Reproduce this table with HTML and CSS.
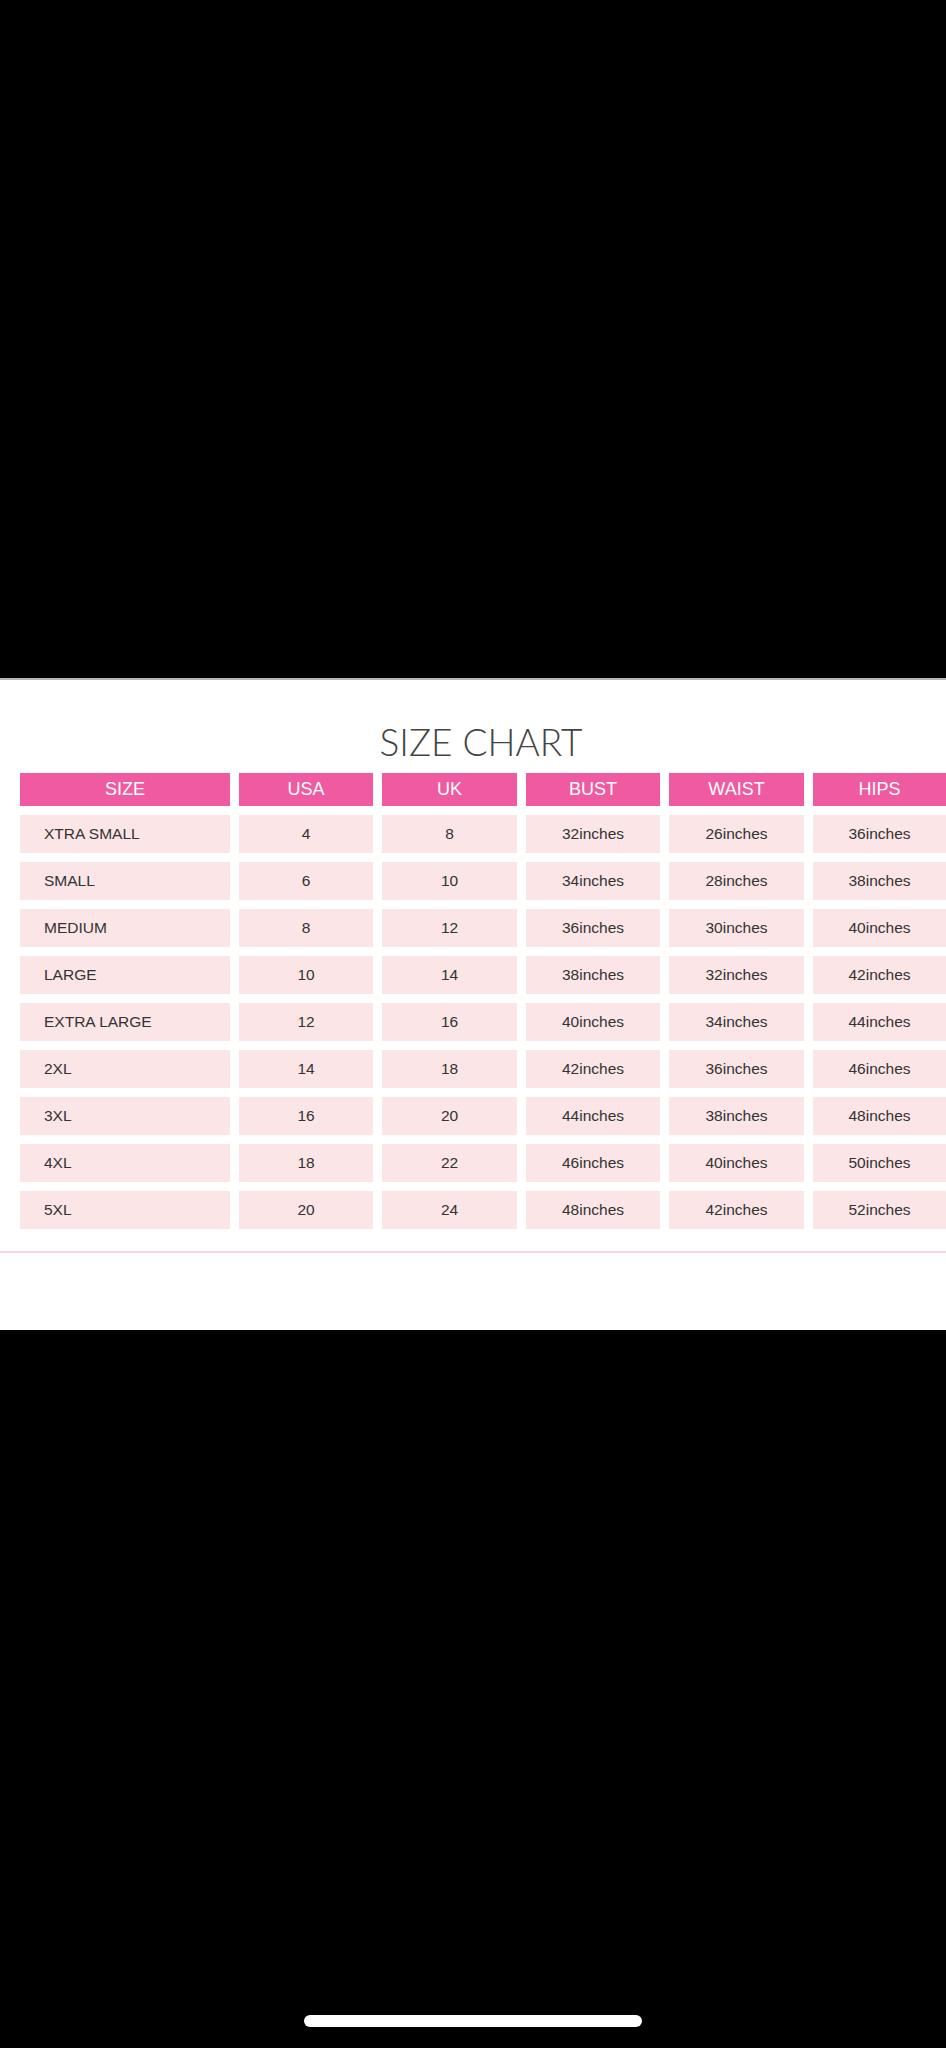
FILE: index.html
```html
<!DOCTYPE html>
<html lang="en">
<head>
<meta charset="utf-8">
<title>Size Chart</title>
<link rel="stylesheet" href="styles.css">
</head>
<body>
<div class="screen">
  <div class="top-black"></div>
  <section class="sheet">
    <h1 class="title">SIZE CHART</h1>
    <div class="chart">
      <div class="hd">SIZE</div><div class="hd">USA</div><div class="hd">UK</div><div class="hd">BUST</div><div class="hd">WAIST</div><div class="hd">HIPS</div>

      <div class="cell name">XTRA SMALL</div><div class="cell">4</div><div class="cell">8</div><div class="cell">32inches</div><div class="cell">26inches</div><div class="cell">36inches</div>
      <div class="cell name">SMALL</div><div class="cell">6</div><div class="cell">10</div><div class="cell">34inches</div><div class="cell">28inches</div><div class="cell">38inches</div>
      <div class="cell name">MEDIUM</div><div class="cell">8</div><div class="cell">12</div><div class="cell">36inches</div><div class="cell">30inches</div><div class="cell">40inches</div>
      <div class="cell name">LARGE</div><div class="cell">10</div><div class="cell">14</div><div class="cell">38inches</div><div class="cell">32inches</div><div class="cell">42inches</div>
      <div class="cell name">EXTRA LARGE</div><div class="cell">12</div><div class="cell">16</div><div class="cell">40inches</div><div class="cell">34inches</div><div class="cell">44inches</div>
      <div class="cell name">2XL</div><div class="cell">14</div><div class="cell">18</div><div class="cell">42inches</div><div class="cell">36inches</div><div class="cell">46inches</div>
      <div class="cell name">3XL</div><div class="cell">16</div><div class="cell">20</div><div class="cell">44inches</div><div class="cell">38inches</div><div class="cell">48inches</div>
      <div class="cell name">4XL</div><div class="cell">18</div><div class="cell">22</div><div class="cell">46inches</div><div class="cell">40inches</div><div class="cell">50inches</div>
      <div class="cell name">5XL</div><div class="cell">20</div><div class="cell">24</div><div class="cell">48inches</div><div class="cell">42inches</div><div class="cell">52inches</div>
    </div>
    <div class="rule"></div>
  </section>
  <div class="bottom-black">
    <div class="home-bar"></div>
  </div>
</div>
</body>
</html>
```

FILE: styles.css
```css
html, body {
  margin: 0;
  padding: 0;
  background: #000;
  overflow: hidden;
}

.screen {
  width: 946px;
  height: 2048px;
  display: flex;
  flex-direction: column;
  background: #000;
}

.top-black {
  height: 678px;
  flex: none;
  background: #000;
}

.sheet {
  flex: none;
  height: 652px;
  box-sizing: border-box;
  background: #fff;
  border-top: 2px solid #b5b5b5;
  padding-top: 41px;
  display: flex;
  flex-direction: column;
}

.title {
  margin: 0 0 11px 0;
  padding-left: 16px;
  text-align: center;
  font-family: Lato, "Open Sans", "Liberation Sans", sans-serif;
  font-weight: 300;
  font-size: 37px;
  line-height: 41px;
  color: #444;
  letter-spacing: 0;
}

.chart {
  margin-left: 20px;
  display: grid;
  grid-template-columns: 210px 134px 135px 134px 135px 133px;
  grid-template-rows: 33px repeat(9, 38px);
  column-gap: 9px;
  row-gap: 9px;
  font-family: "Liberation Sans", Arial, sans-serif;
}

.hd {
  background: #ef5aa1;
  color: #fff;
  font-size: 18px;
  display: flex;
  align-items: center;
  justify-content: center;
}

.cell {
  background: #fce5e6;
  color: #333;
  font-size: 15.5px;
  display: flex;
  align-items: center;
  justify-content: center;
}

.cell.name {
  justify-content: flex-start;
  padding-left: 24px;
}

.rule {
  margin-top: 22px;
  height: 2px;
  background: #f8d6e1;
}

.bottom-black {
  flex: 1;
  background: #000;
  display: flex;
  justify-content: center;
  align-items: flex-end;
  padding-bottom: 21px;
}

.home-bar {
  width: 338px;
  height: 12px;
  border-radius: 6px;
  background: #fff;
}
```
